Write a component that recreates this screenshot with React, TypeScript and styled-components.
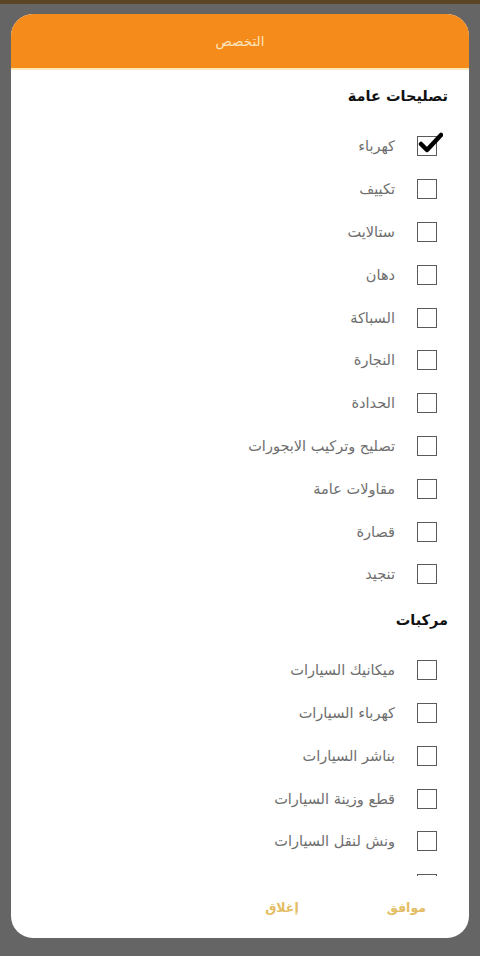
import styled, { createGlobalStyle } from "styled-components";

const GlobalStyle = createGlobalStyle`
  html, body {
    margin: 0;
    padding: 0;
    background: #656565;
    font-family: "DejaVu Sans", "Noto Sans", sans-serif;
  }
`;

const Screen = styled.div`
  width: 480px;
  height: 956px;
  background: #656565;
  border-top: 4px solid #5c4525;
  box-sizing: border-box;
  padding: 10px 11px 18px;
  direction: rtl;
`;

const Dialog = styled.div`
  height: 100%;
  background: #ffffff;
  border-radius: 22px;
  overflow: hidden;
  display: flex;
  flex-direction: column;
`;

const Header = styled.div`
  height: 56px;
  flex: none;
  background: #f58b1a;
  border-bottom: 2px solid #fde9b8;
  box-sizing: border-box;
  display: flex;
  align-items: center;
  justify-content: center;
  color: #fde3bd;
  font-size: 13.5px;
`;

const List = styled.div`
  flex: 1;
  overflow: hidden;
  padding: 15px 21px 0 0;
`;

const SectionTitle = styled.div<{ $first?: boolean }>`
  height: 22px;
  line-height: 22px;
  margin-top: ${({ $first }) => ($first ? 0 : 13)}px;
  margin-bottom: 18px;
  font-size: 14.5px;
  font-weight: bold;
  color: #111;
`;

const Row = styled.div`
  height: 42.8px;
  display: flex;
  align-items: center;
  gap: 22px;
  padding-right: 11px;
`;

const Box = styled.div`
  position: relative;
  width: 20px;
  height: 20px;
  flex: none;
  box-sizing: border-box;
  border: 1.5px solid #5a5a5a;
`;

const Check = styled.svg`
  position: absolute;
  left: 0px;
  top: -5px;
  width: 25px;
  height: 22px;
`;

const Label = styled.span`
  font-size: 14.5px;
  color: #6e6e6e;
`;

const Footer = styled.div`
  height: 62px;
  flex: none;
  display: flex;
  align-items: center;
  padding: 0 43px 0 0;
  gap: 88px;
`;

const Action = styled.button`
  background: none;
  border: none;
  padding: 0;
  font-family: inherit;
  font-size: 12.5px;
  font-weight: bold;
  color: #e4bc62;
`;

const general = [
  "كهرباء",
  "تكييف",
  "ستالايت",
  "دهان",
  "السباكة",
  "النجارة",
  "الحدادة",
  "تصليح وتركيب الابجورات",
  "مقاولات عامة",
  "قصارة",
  "تنجيد",
];

const vehicles = [
  "ميكانيك السيارات",
  "كهرباء السيارات",
  "بناشر السيارات",
  "قطع وزينة السيارات",
  "ونش لنقل السيارات",
  "سمكرة السيارات",
];

function Item({ label, checked }: { label: string; checked?: boolean }) {
  return (
    <Row>
      <Box>
        {checked && (
          <Check viewBox="0 0 25 22">
            <path
              d="M3 12 L9 18 L23 3"
              fill="none"
              stroke="#000"
              strokeWidth="4.5"
              strokeLinecap="round"
              strokeLinejoin="round"
            />
          </Check>
        )}
      </Box>
      <Label>{label}</Label>
    </Row>
  );
}

export default function App() {
  return (
    <>
      <GlobalStyle />
      <Screen>
        <Dialog>
          <Header>التخصص</Header>
          <List>
            <SectionTitle $first>تصليحات عامة</SectionTitle>
            {general.map((g, i) => (
              <Item key={g} label={g} checked={i === 0} />
            ))}
            <SectionTitle>مركبات</SectionTitle>
            {vehicles.map((v) => (
              <Item key={v} label={v} />
            ))}
          </List>
          <Footer>
            <Action>موافق</Action>
            <Action>إغلاق</Action>
          </Footer>
        </Dialog>
      </Screen>
    </>
  );
}
